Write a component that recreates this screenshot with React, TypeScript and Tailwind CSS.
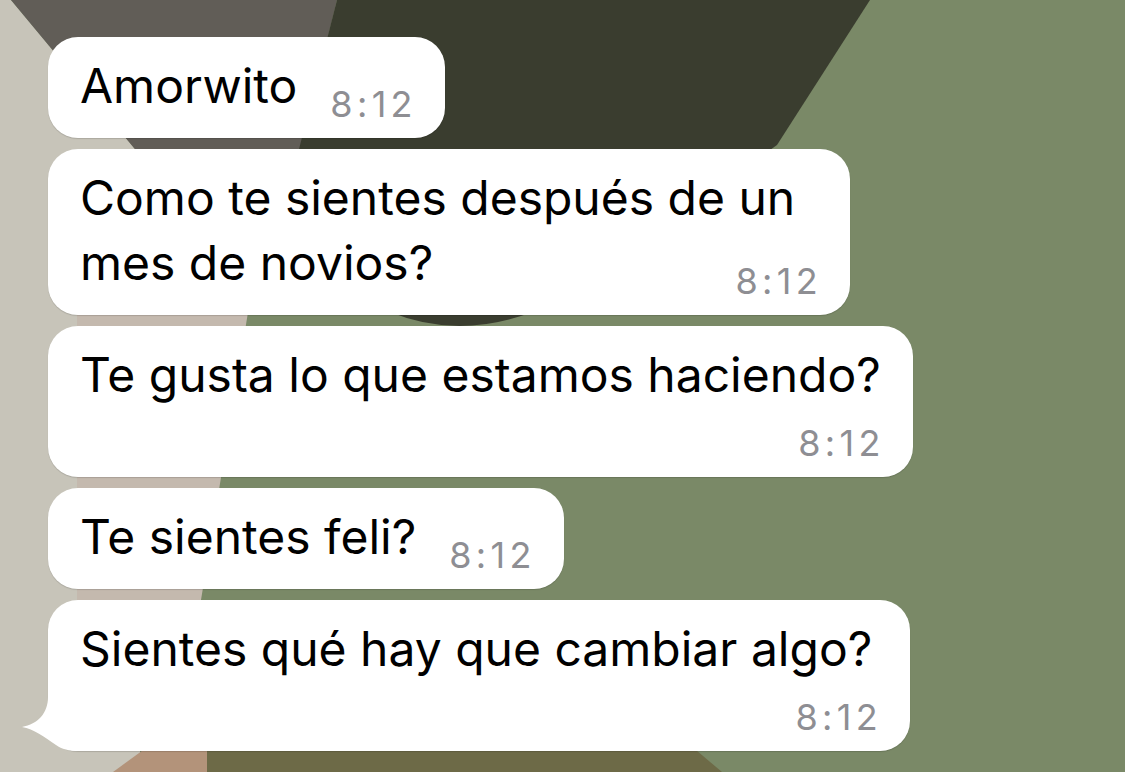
import React from "react";

type Msg = {
  lines: string[];
  time: string;
  layout: "inline" | "overlap" | "below";
  tail?: boolean;
  extra?: string;
};

const messages: Msg[] = [
  { lines: ["Amorwito"], time: "8:12", layout: "inline" },
  {
    lines: ["Como te sientes después de un", "mes de novios?"],
    time: "8:12",
    layout: "overlap",
    extra: "min-w-[802px]",
  },
  { lines: ["Te gusta lo que estamos haciendo?"], time: "8:12", layout: "below" },
  { lines: ["Te sientes feli?"], time: "8:12", layout: "inline" },
  {
    lines: ["Sientes qué hay que cambiar algo?"],
    time: "8:12",
    layout: "below",
    tail: true,
    extra: "min-w-[862px]",
  },
];

function Wallpaper() {
  return (
    <svg
      className="absolute inset-0 h-full w-full"
      viewBox="0 0 1125 772"
      preserveAspectRatio="none"
    >
      <rect width="1125" height="772" fill="#7a8967" />
      <path d="M0 0 H11 L140 155 L140 772 H0 Z" fill="#c7c4b9" />
      <path d="M77 300 H250 L201 600 L190 742 H77 Z" fill="#c4b9ae" />
      <path d="M150 745 H207 V772 H113 Z" fill="#b3937a" />
      <path d="M207 745 H690 L722 772 H207 Z" fill="#6d6a47" />
      <path d="M11 0 H337 L297 160 H144 Z" fill="#615d57" />
      <path d="M337 0 H870 L777 145 L560 300 Q470 345 390 312 L297 157 Z" fill="#3a3d2f" />
    </svg>
  );
}

function Tail() {
  return (
    <svg
      className="absolute bottom-0 left-[-26px] h-[54px] w-[60px]"
      viewBox="0 0 60 54"
    >
      <path
        d="M26 0 C26 16 16 27 0 30 C12 32 22 40 34 48 C40 52 46 54 58 54 L58 0 Z"
        fill="#ffffff"
      />
    </svg>
  );
}

function Time({ value, className = "" }: { value: string; className?: string }) {
  return (
    <span
      className={`-mr-1 text-[36px] leading-[28px] tracking-[0.12em] text-[#8e8e93] ${className}`}
    >
      {value}
    </span>
  );
}

function Bubble({ msg }: { msg: Msg }) {
  const text = (
    <p className="whitespace-nowrap text-[48px] leading-[65px] text-black">
      {msg.lines.map((l, i) => (
        <React.Fragment key={i}>
          {i > 0 && <br />}
          {l}
        </React.Fragment>
      ))}
    </p>
  );

  return (
    <div
      className={`relative rounded-[30px] bg-white px-8 pb-5 pt-4 shadow-[0_1px_1px_rgba(0,0,0,0.14)] ${
        msg.extra ?? ""
      }`}
    >
      {msg.tail && <Tail />}
      {msg.layout === "inline" ? (
        <div className="flex items-end gap-[33px]">
          {text}
          <Time value={msg.time} />
        </div>
      ) : (
        <div className="flex flex-col">
          {text}
          <Time
            value={msg.time}
            className={msg.layout === "overlap" ? "-mt-7 self-end" : "mt-[22px] self-end"}
          />
        </div>
      )}
    </div>
  );
}

export default function App() {
  return (
    <div className="relative h-[772px] w-[1125px] overflow-hidden font-['Inter',sans-serif]">
      <Wallpaper />
      <div className="relative flex flex-col items-start gap-[11px] pl-12 pt-[37px]">
        {messages.map((m, i) => (
          <Bubble key={i} msg={m} />
        ))}
      </div>
    </div>
  );
}
